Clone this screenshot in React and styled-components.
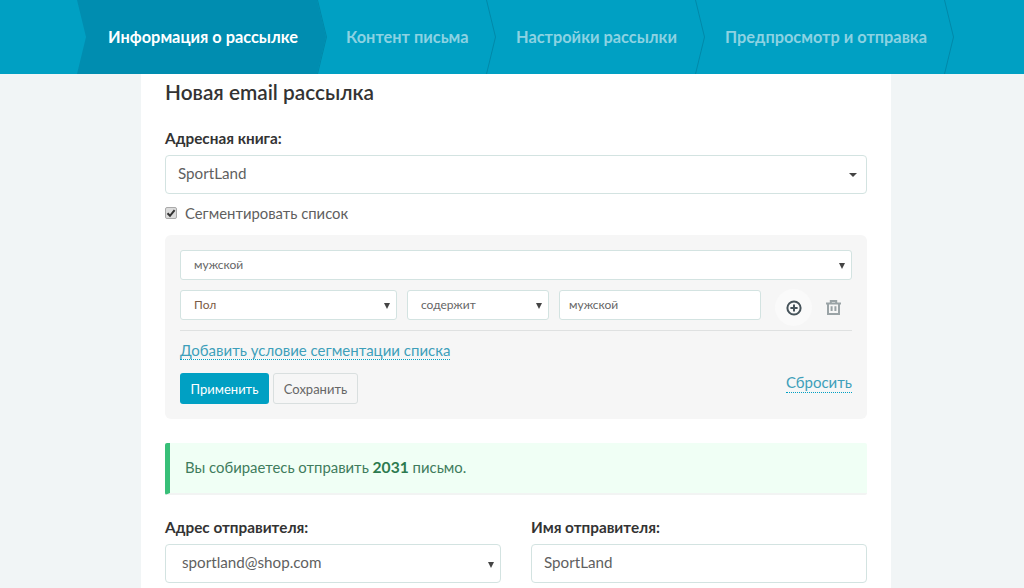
import styled, { createGlobalStyle } from 'styled-components'

const steps = [
  { title: 'Информация о рассылке', width: 240, inset: 31, active: true },
  { title: 'Контент письма', width: 169, inset: 29 },
  { title: 'Настройки рассылки', width: 209, inset: 30 },
  { title: 'Предпросмотр и отправка', width: 249, inset: 30 },
]

const App = () => {
  return (
    <Page>
      <GlobalStyle />
      <StepsBar>
        {steps.map((step) => (
          <Step key={step.title} $width={step.width} $inset={step.inset} $active={step.active}>
            {step.title}
            <Chevron viewBox="0 0 10 74" preserveAspectRatio="none">
              <path d="M0.5 0 L9.5 37 L0.5 74" fill="none" stroke="#0089a9" strokeWidth="1" />
            </Chevron>
          </Step>
        ))}
      </StepsBar>
      <Card>
        <Title>Новая email рассылка</Title>
        <Label>Адресная книга:</Label>
        <SelectBox>
          SportLand
          <Caret $small />
        </SelectBox>
        <CheckRow>
          <CheckBox>
            <svg width="10" height="10" viewBox="0 0 10 10">
              <path d="M1.5 5.2 L4 7.8 L8.6 2.2" fill="none" stroke="#333" strokeWidth="2" />
            </svg>
          </CheckBox>
          Сегментировать список
        </CheckRow>
        <SegmentPanel>
          <SmallSelect>
            мужской
            <Caret />
          </SmallSelect>
          <ConditionRow>
            <SmallSelect $width={217} $accent>
              Пол
              <Caret />
            </SmallSelect>
            <SmallSelect $width={142}>
              содержит
              <Caret />
            </SmallSelect>
            <SmallInput>мужской</SmallInput>
            <PlusButton>
              <svg width="16" height="16" viewBox="0 0 16 16">
                <circle cx="8" cy="8" r="6.6" fill="none" stroke="#46535a" strokeWidth="2" />
                <path d="M8 4.4 V11.6 M4.4 8 H11.6" stroke="#46535a" strokeWidth="2" />
              </svg>
            </PlusButton>
            <TrashButton>
              <svg width="15" height="15" viewBox="0 0 15 15">
                <path
                  d="M0 3.5 H15 M4.8 3.5 V1 H10.2 V3.5 M2 3.5 V14 H13 V3.5 M5.6 6.2 V11 M9.4 6.2 V11"
                  fill="none"
                  stroke="#9aa3a6"
                  strokeWidth="2"
                />
              </svg>
            </TrashButton>
          </ConditionRow>
          <Divider />
          <AddLink>Добавить условие сегментации списка</AddLink>
          <PanelFooter>
            <PrimaryButton>Применить</PrimaryButton>
            <GhostButton>Сохранить</GhostButton>
            <ResetLink>Сбросить</ResetLink>
          </PanelFooter>
        </SegmentPanel>
        <Notice>
          Вы собираетесь отправить&nbsp;<b>2031</b>&nbsp;письмо.
        </Notice>
        <SenderGrid>
          <div>
            <Label>Адрес отправителя:</Label>
            <SelectBox $inset={16}>
              sportland@shop.com
              <Caret />
            </SelectBox>
          </div>
          <div>
            <Label>Имя отправителя:</Label>
            <SelectBox>SportLand</SelectBox>
          </div>
        </SenderGrid>
      </Card>
    </Page>
  )
}

export default App

const GlobalStyle = createGlobalStyle`
  html, body {
    margin: 0;
    padding: 0;
    background: #f1f5f6;
  }
  * {
    box-sizing: border-box;
  }
`

const Page = styled.div`
  height: 588px;
  overflow: hidden;
  font-family: Lato, "Open Sans", sans-serif;
  font-size: 15px;
  color: #5a5a5a;
`

const StepsBar = styled.header`
  display: flex;
  height: 74px;
  padding-left: 77px;
  background: #00a0c3;
`

const Step = styled.div`
  position: relative;
  flex: none;
  display: flex;
  align-items: center;
  width: ${(p) => p.$width}px;
  padding: 0 0 2px ${(p) => p.$inset}px;
  font-size: 16.35px;
  font-weight: 700;
  white-space: nowrap;
  color: ${(p) => (p.$active ? '#fff' : '#8cd2e2')};
  z-index: 0;

  ${(p) =>
    p.$active &&
    `
    &::before {
      content: '';
      position: absolute;
      top: 0;
      bottom: 0;
      left: 0;
      right: -9px;
      z-index: -1;
      background: #008db0;
      clip-path: polygon(0 0, 240px 0, 249px 50%, 240px 100%, 0 100%, 9px 50%);
    }
  `}
`

const Chevron = styled.svg`
  position: absolute;
  top: 0;
  right: -10px;
  width: 10px;
  height: 74px;
`

const Card = styled.main`
  width: 750px;
  min-height: 514px;
  margin: 0 auto 0 141px;
  padding: 5px 24px 0;
  background: #fff;
`

const Title = styled.h1`
  margin: 0 0 23px;
  font-size: 20.8px;
  line-height: 26px;
  font-weight: 600;
  color: #333;
`

const Label = styled.div`
  margin-bottom: 7px;
  font-size: 15.3px;
  line-height: 20px;
  font-weight: 700;
  color: #333;
`

const SelectBox = styled.div`
  position: relative;
  display: flex;
  align-items: center;
  height: 39px;
  padding: 0 0 3px ${(p) => p.$inset || 12}px;
  background: #fff;
  border: 1px solid #d3e3e1;
  border-radius: 4px;
  font-size: 15.2px;
  color: #5f5f5f;
`

const Caret = styled.span`
  position: absolute;
  top: 50%;
  right: ${(p) => (p.$small ? 9 : 6)}px;
  margin-top: -2px;
  border-style: solid;
  border-color: #444 transparent transparent;
  border-width: ${(p) => (p.$small ? '4px 4px 0' : '6px 3.5px 0')};
`

const CheckRow = styled.div`
  display: flex;
  align-items: center;
  gap: 8px;
  height: 20px;
  margin-top: 9px;
  font-size: 14.85px;
  color: #5f5f5f;
`

const CheckBox = styled.span`
  display: flex;
  align-items: center;
  justify-content: center;
  width: 12px;
  height: 12px;
  background: #dcdcdc;
  border: 1px solid #aaa;
  border-radius: 2px;
`

const SegmentPanel = styled.section`
  margin-top: 12px;
  height: 184px;
  padding: 15px;
  background: #f6f6f6;
  border-radius: 6px;
`

const SmallSelect = styled.div`
  position: relative;
  flex: none;
  display: flex;
  align-items: center;
  width: ${(p) => (p.$width ? `${p.$width}px` : 'auto')};
  height: 30px;
  padding: 0 0 2px 13px;
  background: #fff;
  border: 1px solid #d3e3e1;
  border-radius: 3px;
  font-size: 12px;
  color: ${(p) => (p.$accent ? '#7a5a45' : '#666')};
`

const ConditionRow = styled.div`
  display: flex;
  align-items: flex-start;
  gap: 10px;
  margin-top: 10px;
`

const SmallInput = styled(SmallSelect)`
  width: 202px;
  padding-left: 9px;
`

const PlusButton = styled.button`
  display: flex;
  align-items: center;
  justify-content: center;
  width: 37px;
  height: 37px;
  margin: -1px 0 0 4px;
  padding: 0;
  border: 0;
  border-radius: 50%;
  background: #fafafa;
`

const TrashButton = styled.button`
  display: flex;
  align-items: center;
  justify-content: center;
  width: 15px;
  height: 37px;
  margin: -1px 0 0 4px;
  padding: 0;
  border: 0;
  background: none;
`

const Divider = styled.hr`
  height: 1px;
  margin: 4px 0 0;
  border: 0;
  background: #dfe1e1;
`

const AddLink = styled.a`
  display: inline-block;
  margin-top: 10px;
  line-height: 18px;
  color: #3e9fba;
  border-bottom: 1px dotted #00a0c3;
`

const PanelFooter = styled.div`
  display: flex;
  align-items: flex-start;
  gap: 4px;
  margin-top: 13px;
`

const PrimaryButton = styled.button`
  width: 89px;
  height: 31px;
  padding: 0;
  background: #00a0c3;
  border: 0;
  border-radius: 3px;
  font: inherit;
  font-size: 13px;
  color: #fff;
`

const GhostButton = styled.button`
  width: 85px;
  height: 31px;
  padding: 0;
  background: #f6f6f6;
  border: 1px solid #d9dfdf;
  border-radius: 3px;
  font: inherit;
  font-size: 13px;
  color: #666;
`

const ResetLink = styled.a`
  margin: -1px 0 0 auto;
  line-height: 20px;
  color: #3e9fba;
  border-bottom: 1px dotted #00a0c3;
`

const Notice = styled.div`
  display: flex;
  align-items: center;
  height: 52px;
  margin-top: 24px;
  padding: 0 0 2px 15px;
  background: #f0fff5;
  border-left: 5px solid #38bf78;
  border-bottom: 2px solid #f2f4f3;
  border-radius: 2px;
  font-size: 14.9px;
  color: #3f7c5d;

  b {
    font-size: 15.6px;
    color: #2c7a4f;
  }
`

const SenderGrid = styled.div`
  display: grid;
  grid-template-columns: 336px 336px;
  gap: 30px;
  margin-top: 22px;
`
